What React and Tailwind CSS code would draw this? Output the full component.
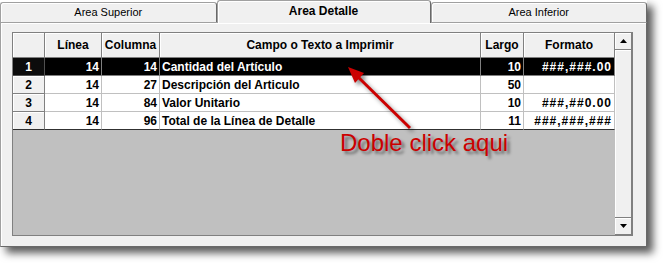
import React from 'react';

const cols = ['w-[32px]', 'w-[57px]', 'w-[58px]', 'w-[321px]', 'w-[43px]', 'w-[91px]'];

const rows = [
    { n: 1, linea: 14, columna: 14, campo: 'Cantidad del Artículo', largo: 10, formato: '###,###.00' },
    { n: 2, linea: 14, columna: 27, campo: 'Descripción del Articulo', largo: 50, formato: '' },
    { n: 3, linea: 14, columna: 84, campo: 'Valor Unitario', largo: 10, formato: '###,##0.00' },
    { n: 4, linea: 14, columna: 96, campo: 'Total de la Línea de Detalle', largo: 11, formato: '###,###,###' },
];

const Tab = ({ label, active }) => {
    if (active) {
        return (
            <div className="relative z-10 flex h-[23px] w-[214px] items-center justify-center rounded-t-[3px] border-x border-t border-[#a0a0a0] border-r-[#696969] bg-[#f0f0f0] pb-[2px] text-[12px] font-bold text-black shadow-[inset_1px_1px_0_#fff]">
                {label}
            </div>
        );
    }
    return (
        <div className="mt-[2px] flex h-[20px] flex-1 items-center justify-center rounded-t-[3px] border-x border-t border-[#a0a0a0] border-r-[#696969] bg-[#f0f0f0] text-[11px] text-black shadow-[inset_1px_1px_0_#fff]">
            {label}
        </div>
    );
};

const Arrow = ({ up }) => (
    <svg width="7" height="4" viewBox="0 0 7 4">
        <polygon points={up ? '3.5,0 7,4 0,4' : '0,0 7,0 3.5,4'} fill="#000" />
    </svg>
);

const App = () => {
    return (
        <div className="relative h-[263px] w-[663px] overflow-hidden bg-white font-['Liberation_Sans',Arial,sans-serif]">
            <div className="w-[647px] shadow-[6px_6px_8px_rgba(0,0,0,0.65)]">
                {/* tabs */}
                <div className="flex h-[22px] bg-white">
                    <Tab label="Area Superior" />
                    <Tab label="Area Detalle" active />
                    <Tab label="Area Inferior" />
                </div>

                {/* panel */}
                <div className="h-[225px] border border-[#a0a0a0] border-b-[#696969] border-r-[#696969] bg-[#f0f0f0] pl-[11px] pt-[9px] shadow-[inset_1px_1px_0_#fff]">
                    <div className="flex h-[204px] w-[621px] border border-[#808080]">
                        {/* table */}
                        <div className="flex w-[602px] flex-col bg-[#c0c0c0] text-[12px] font-bold">
                            <div className="flex h-[25px] bg-[#f0f0f0]">
                                {['', 'Línea', 'Columna', 'Campo o Texto a Imprimir', 'Largo', 'Formato'].map((h, i) => (
                                    <div key={i} className={`${cols[i]} flex items-center justify-center border-b border-r border-[#808080] shadow-[inset_1px_1px_0_#fff]`}>
                                        {h}
                                    </div>
                                ))}
                            </div>
                            {rows.map((r) => {
                                const sel = r.n === 1;
                                const last = r.n === 4;
                                const cell = `flex h-[18px] items-center px-[2px] border-r ${last ? 'border-b border-b-[#303030]' : 'border-b'} ${sel ? 'bg-black text-white border-[#808080]' : 'bg-white text-black border-[#c0c0c0]'}`;
                                return (
                                    <div key={r.n} className="flex">
                                        <div className={`${cols[0]} flex h-[18px] items-center justify-center border-b border-r ${sel ? 'border-[#505050] bg-[#0c0c0c] text-white' : 'border-[#808080] bg-[#f0f0f0] text-black shadow-[inset_1px_1px_0_#fff]'} ${last ? 'border-b-[#303030]' : ''}`}>
                                            {r.n}
                                        </div>
                                        <div className={`${cols[1]} ${cell} justify-end`}>{r.linea}</div>
                                        <div className={`${cols[2]} ${cell} justify-end`}>{r.columna}</div>
                                        <div className={`${cols[3]} ${cell}`}>{r.campo}</div>
                                        <div className={`${cols[4]} ${cell} justify-end`}>{r.largo}</div>
                                        <div className={`${cols[5]} ${cell} justify-end tracking-[1px]`}>{r.formato}</div>
                                    </div>
                                );
                            })}
                        </div>

                        {/* scrollbar */}
                        <div className="flex w-[17px] flex-col bg-[#f0f0f0]">
                            <div className="flex h-[17px] items-center justify-center border-b border-r border-[#808080] shadow-[inset_1px_1px_0_#fff]">
                                <Arrow up />
                            </div>
                            <div className="flex-1 border-b border-r border-[#808080] shadow-[inset_1px_1px_0_#fff]" />
                            <div className="flex h-[17px] items-center justify-center border-b border-r border-[#808080] shadow-[inset_1px_1px_0_#fff]">
                                <Arrow />
                            </div>
                        </div>
                    </div>
                </div>
            </div>

            {/* annotation */}
            <svg className="absolute left-0 top-0 drop-shadow-[3px_3px_2px_rgba(0,0,0,0.45)]" width="663" height="263">
                <line x1="410" y1="128" x2="356" y2="75" stroke="#cc0000" strokeWidth="3" />
                <polygon points="348,67 364,73 355,83" fill="#cc0000" />
            </svg>
            <div className="absolute left-[340px] top-[131px] text-[24px] leading-[24px] text-[#cc0000] [text-shadow:3px_3px_3px_rgba(0,0,0,0.45)]">
                Doble click aqui
            </div>
        </div>
    );
};

export default App;
